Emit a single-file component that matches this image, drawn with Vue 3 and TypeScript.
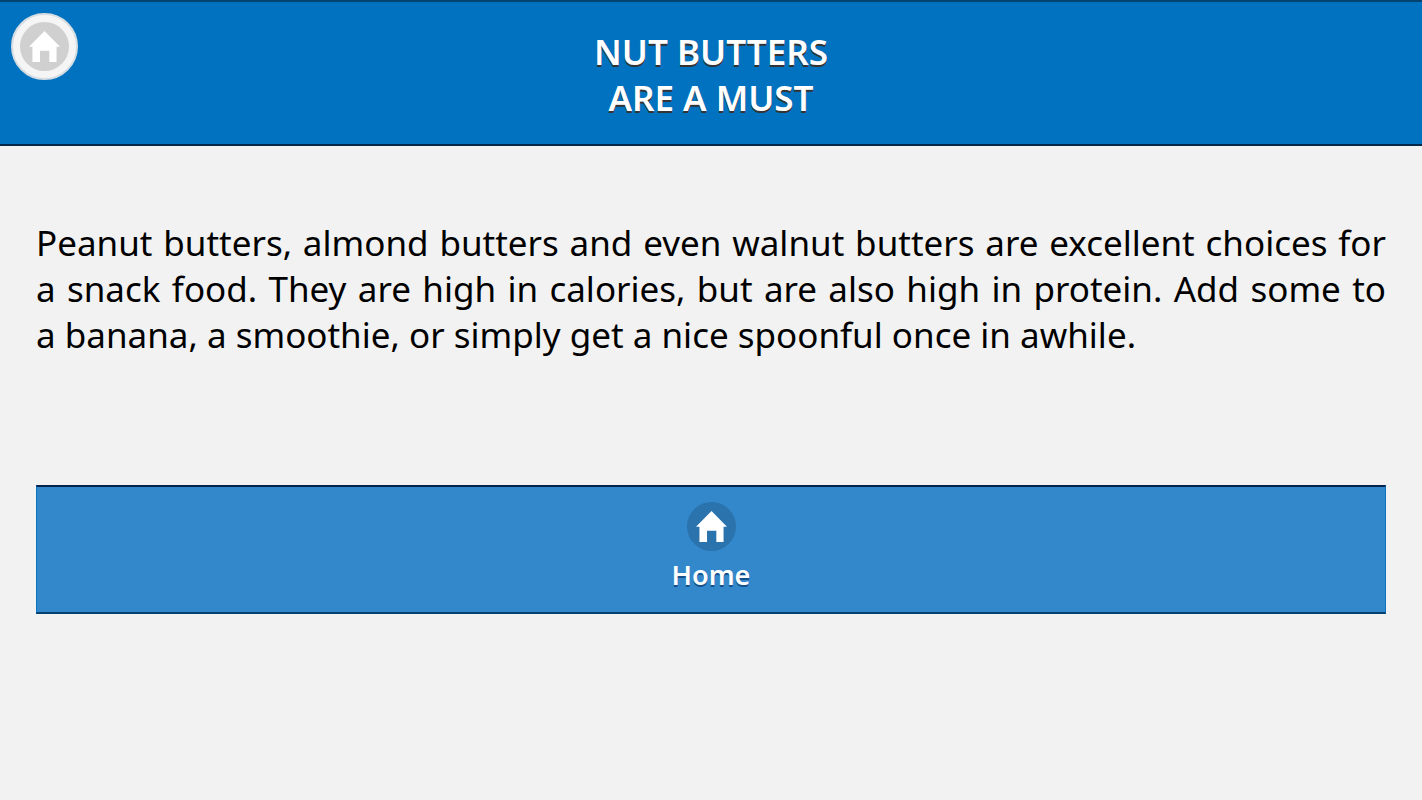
<script setup lang="ts">
const title: string[] = ['NUT BUTTERS', 'ARE A MUST']
const home = 'M9 0 L18 9.1 H16 V18 H11.8 V11.5 H6.4 V18 H2 V9.1 H0 Z'
</script>

<template>
  <div class="page">
    <header class="header">
      <button class="round" type="button" aria-label="Home">
        <span class="disc"><svg viewBox="0 0 18 18" aria-hidden="true"><path :d="home" /></svg></span>
      </button>
      <h1><span v-for="line in title" :key="line">{{ line }}</span></h1>
    </header>
    <main class="content">
      <p>
        Peanut butters, almond butters and even walnut butters are excellent choices for a snack food.
        They are high in calories, but are also high in protein. Add some to a&nbsp;banana, a smoothie, or
        simply get a nice spoonful once in awhile.
      </p>
      <nav>
        <a class="bar" href="#home">
          <span class="disc"><svg viewBox="0 0 18 18" aria-hidden="true"><path :d="home" /></svg></span>
          Home
        </a>
      </nav>
    </main>
  </div>
</template>

<style>
body { margin: 0; background: #f2f2f2; }
</style>

<style scoped>
.page {
  min-height: 100vh;
  background: #f2f2f2;
  color: #000;
  font-family: "Noto Sans", "Open Sans", sans-serif;
}
.header {
  position: relative;
  box-sizing: border-box;
  padding: 27px 80px 23px;
  border-top: 2px solid #04426f;
  border-bottom: 2px solid #04284a;
  background: #0072bf;
}
h1 {
  margin: 0;
  color: #fff;
  font-size: 35px;
  line-height: 46px;
  font-weight: 600;
  text-align: center;
  text-shadow: 0 2px 0 #333;
}
h1 span { display: block; }
.round {
  position: absolute;
  top: 11px;
  left: 11px;
  box-sizing: border-box;
  width: 67px;
  height: 67px;
  padding: 7px;
  border: 2px solid #d5dde2;
  border-radius: 50%;
  background: #f5f5f5;
}
.disc {
  display: grid;
  place-items: center;
  width: 49px;
  height: 49px;
  border-radius: 50%;
  background: #d0d0d0;
}
.disc svg { width: 31px; height: 31px; fill: #fff; }
.content { padding: 74px 36px 0; }
p {
  margin: 0 0 127px;
  font-size: 35px;
  line-height: 46px;
  text-align: justify;
}
.bar {
  display: flex;
  flex-direction: column;
  align-items: center;
  gap: 2px;
  padding: 15px 0;
  border: 2px solid;
  border-width: 2px 1px;
  border-color: #04214f #0a74c0 #04426f;
  background: #3388cc;
  color: #fff;
  font-size: 27px;
  line-height: 44px;
  font-weight: 600;
  text-decoration: none;
  text-shadow: 0 2px 0 #14508a;
}
.bar .disc { background: #2b73ad; }
</style>
